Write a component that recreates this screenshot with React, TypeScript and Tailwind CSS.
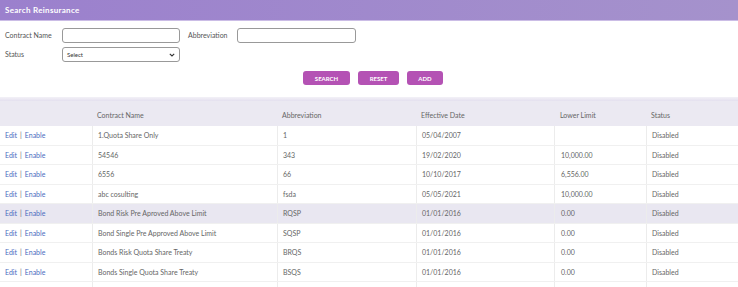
import React from "react";

const rows = [
  { name: "1.Quota Share Only", abbr: "1", date: "05/04/2007", lower: "", status: "Disabled" },
  { name: "54546", abbr: "343", date: "19/02/2020", lower: "10,000.00", status: "Disabled" },
  { name: "6556", abbr: "66", date: "10/10/2017", lower: "6,556.00", status: "Disabled" },
  { name: "abc cosulting", abbr: "fsda", date: "05/05/2021", lower: "10,000.00", status: "Disabled" },
  { name: "Bond Risk Pre Aproved Above Limit", abbr: "RQSP", date: "01/01/2016", lower: "0.00", status: "Disabled", hl: true },
  { name: "Bond Single Pre Approved Above Limit", abbr: "SQSP", date: "01/01/2016", lower: "0.00", status: "Disabled" },
  { name: "Bonds Risk Quota Share Treaty", abbr: "BRQS", date: "01/01/2016", lower: "0.00", status: "Disabled" },
  { name: "Bonds Single Quota Share Treaty", abbr: "BSQS", date: "01/01/2016", lower: "0.00", status: "Disabled" },
  { name: "", abbr: "", date: "", lower: "", status: "" },
];

const cols = "grid grid-cols-[92px_185px_139px_138px_92px_1fr]";

export default function App() {
  return (
    <div className="w-[738px] h-[287px] overflow-hidden bg-white text-[#666] font-['Lato','Open_Sans',sans-serif]">
      {/* Header */}
      <div className="h-[21px] flex items-center px-[5px] bg-gradient-to-r from-[#9b80cd] to-[#a592cc] border-b border-[#cbbde6]">
        <span className="text-white text-[8px] font-bold tracking-[0.3px]">Search Reinsurance</span>
      </div>

      {/* Form */}
      <div className="pt-[7px] px-[5px] text-[7px] text-[#555]">
        <div className="flex items-center h-[15px]">
          <label className="w-[57px]">Contract Name</label>
          <input className="w-[118px] h-[15px] border border-[#999] rounded-[3px] bg-white" />
          <label className="ml-[8px] w-[49px]">Abbreviation</label>
          <input className="w-[119px] h-[15px] border border-[#999] rounded-[3px] bg-white" />
        </div>
        <div className="flex items-center h-[15px] mt-[4px]">
          <label className="w-[57px]">Status</label>
          <div className="w-[118px] h-[15px] border border-[#999] rounded-[3px] bg-white flex items-center justify-between px-[4px]">
            <span className="text-[6px] text-[#333]">Select</span>
            <svg width="6" height="4" viewBox="0 0 6 4" fill="none">
              <path d="M0.8 0.8 L3 3 L5.2 0.8" stroke="#333" strokeWidth="1.1" />
            </svg>
          </div>
        </div>
        <div className="flex justify-center gap-[8px] mt-[9px] pl-[8px]">
          <button className="w-[47px] h-[14px] rounded-[3px] bg-[#b452b4] text-white text-[6px] font-bold">SEARCH</button>
          <button className="w-[41px] h-[14px] rounded-[3px] bg-[#b452b4] text-white text-[6px] font-bold">RESET</button>
          <button className="w-[36px] h-[14px] rounded-[3px] bg-[#b452b4] text-white text-[6px] font-bold">ADD</button>
        </div>
      </div>

      {/* Separator */}
      <div className="mt-[12px] h-[4px] bg-gradient-to-b from-[#f3f1f7] to-[#e4e0ef]" />

      {/* Table */}
      <div className="text-[7px] text-[#666]">
        <div className={`${cols} h-[25px] bg-[#ebe9f2] items-end pb-[6px]`}>
          <div />
          <div className="pl-[5px]">Contract Name</div>
          <div className="pl-[5px]">Abbreviation</div>
          <div className="pl-[5px]">Effective Date</div>
          <div className="pl-[6px]">Lower Limit</div>
          <div className="pl-[5px]">Status</div>
        </div>
        {rows.map((r, i) => (
          <div
            key={i}
            className={`${cols} h-[19.5px] items-center border-b border-[#f0f0f0] ${r.hl ? "bg-[#e9e7f1]" : "bg-white"}`}
          >
            <div className="pl-[5px] text-[#4a6cc0] h-full flex items-center">
              {r.name && (
                <>
                  <span>Edit</span>
                  <span className="mx-[3px] text-[#666]">|</span>
                  <span>Enable</span>
                </>
              )}
            </div>
            <div className="pl-[5px] h-full flex items-center border-l border-[#ececec]">{r.name}</div>
            <div className="pl-[5px] h-full flex items-center border-l border-[#ececec]">{r.abbr}</div>
            <div className="pl-[5px] h-full flex items-center border-l border-[#ececec]">{r.date}</div>
            <div className="pl-[6px] h-full flex items-center border-l border-[#ececec]">{r.lower}</div>
            <div className="pl-[5px] h-full flex items-center border-l border-[#ececec]">{r.status}</div>
          </div>
        ))}
      </div>
    </div>
  );
}
